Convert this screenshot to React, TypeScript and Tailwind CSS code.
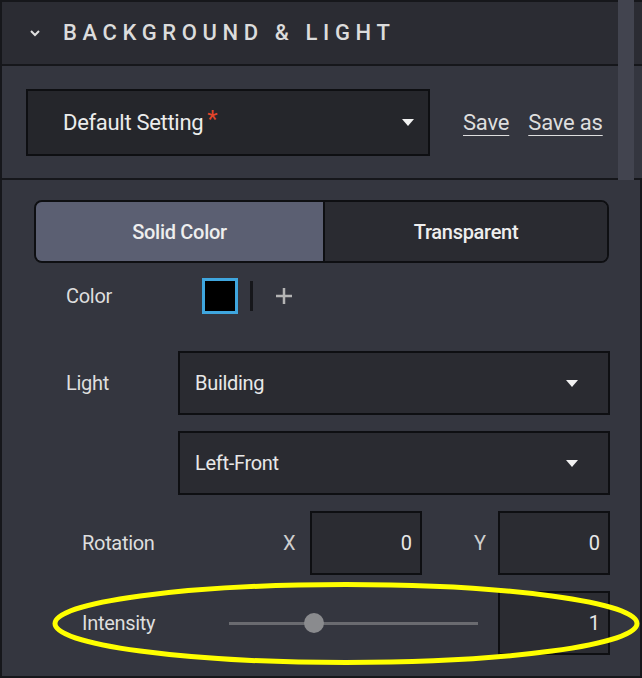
import React from "react";

const Caret = () => (
  <svg width="12" height="7" viewBox="0 0 12 7" className="shrink-0">
    <polygon points="0,0 12,0 6,7" fill="#f2f2f2" />
  </svg>
);

export default function App() {
  const font = { fontFamily: "Roboto, 'Liberation Sans', sans-serif" };
  return (
    <div
      className="relative w-[642px] h-[678px] overflow-hidden bg-[#16171b] text-[#e4e4e4]"
      style={font}
    >
      {/* top section */}
      <div className="flex flex-col pt-[2px] pl-[2px]">
        <div className="h-[62px] bg-[#2b2c33] flex items-center">
          <svg width="12" height="8" viewBox="0 0 12 8" className="ml-[27px]">
            <polyline points="2,2 6,6 10,2" fill="none" stroke="#e0e0e0" strokeWidth="2" />
          </svg>
          <span className="ml-[22px] text-[22px] font-medium tracking-[0.255em] text-[#dcdcdc] leading-none">
            BACKGROUND &amp; LIGHT
          </span>
        </div>
        <div className="h-[2px] bg-[#16171b]" />
        <div className="h-[112px] bg-[#34363f] flex items-center">
          <div className="ml-[24px] w-[404px] h-[67px] bg-[#25262b] border-2 border-[#0e0f12] flex items-center pl-[35px] pr-[14px]">
            <span className="text-[22px] tracking-[-0.3px] text-[#ececec]">Default Setting</span>
            <span className="text-[24px] text-[#e2452a] ml-[4px] -mt-[6px] leading-none">*</span>
            <div className="flex-1" />
            <Caret />
          </div>
          <span className="ml-[33px] text-[22px] tracking-[-0.2px] underline underline-offset-[5px] decoration-1 text-[#dedede]">Save</span>
          <span className="ml-[19px] text-[22px] tracking-[-0.2px] underline underline-offset-[5px] decoration-1 text-[#dedede]">Save as</span>
        </div>
        <div className="h-[2px] bg-[#16171b]" />
      </div>

      {/* scrollbar overlay */}
      <div className="absolute left-[618px] top-0 w-[16px] h-[180px] bg-[#42444f]" />

      {/* lower panel */}
      <div className="mx-[2px] h-[496px] bg-[#34363f] flex flex-col pt-[20px]">
        {/* toggle */}
        <div className="ml-[32px] w-[575px] h-[63px] rounded-[8px] border-2 border-[#0e0f12] flex overflow-hidden">
          <div className="w-[289px] bg-[#5b5f72] flex items-center justify-center text-[20px] font-medium tracking-[-0.3px] text-[#eeeeee] border-r-2 border-[#0e0f12]">
            Solid Color
          </div>
          <div className="flex-1 bg-[#2a2b31] flex items-center justify-center text-[20px] font-medium tracking-[-0.3px] text-[#eeeeee]">
            Transparent
          </div>
        </div>

        {/* color row */}
        <div className="flex items-center h-[36px] mt-[15px]">
          <span className="ml-[64px] w-[136px] text-[20px] tracking-[-0.3px] text-[#dedede]">Color</span>
          <div className="w-[36px] h-[36px] border-[3px] border-[#3fa6de] bg-black" />
          <div className="ml-[12px] w-[3px] h-[30px] bg-[#16171b]" />
          <svg width="18" height="18" viewBox="0 0 18 18" className="ml-[22px]">
            <path d="M9 1 V17 M1 9 H17" stroke="#b4b4b4" strokeWidth="2.5" />
          </svg>
        </div>

        {/* light */}
        <div className="flex items-center mt-[37px]">
          <span className="ml-[64px] w-[112px] text-[20px] tracking-[-0.3px] text-[#dedede]">Light</span>
          <div className="w-[432px] h-[64px] bg-[#2a2b31] border-2 border-[#0e0f12] flex items-center pl-[15px] pr-[30px]">
            <span className="flex-1 text-[20px] tracking-[-0.3px] text-[#e8e8e8]">Building</span>
            <Caret />
          </div>
        </div>
        <div className="flex items-center mt-[16px]">
          <div className="ml-[176px] w-[432px] h-[64px] bg-[#2a2b31] border-2 border-[#0e0f12] flex items-center pl-[15px] pr-[30px]">
            <span className="flex-1 text-[20px] tracking-[-0.3px] text-[#e8e8e8]">Left-Front</span>
            <Caret />
          </div>
        </div>

        {/* rotation */}
        <div className="flex items-center mt-[16px]">
          <span className="ml-[80px] w-[201px] text-[20px] tracking-[-0.3px] text-[#dedede]">Rotation</span>
          <span className="w-[27px] text-[20px] text-[#cfcfcf]">X</span>
          <div className="w-[112px] h-[64px] bg-[#2b2c32] border-2 border-[#0e0f12] flex items-center justify-end pr-[8px] text-[20px] text-[#e8e8e8]">
            0
          </div>
          <span className="ml-[52px] w-[24px] text-[20px] text-[#cfcfcf]">Y</span>
          <div className="w-[112px] h-[64px] bg-[#2b2c32] border-2 border-[#0e0f12] flex items-center justify-end pr-[8px] text-[20px] text-[#e8e8e8]">
            0
          </div>
        </div>

        {/* intensity */}
        <div className="flex items-center mt-[16px]">
          <span className="ml-[80px] w-[147px] text-[20px] tracking-[-0.3px] text-[#dedede]">Intensity</span>
          <div className="relative w-[249px] h-[20px] flex items-center">
            <div className="w-full h-[3px] bg-[#6a6b70]" />
            <div className="absolute left-[75px] top-0 w-[20px] h-[20px] rounded-full bg-[#8a8b8e]" />
          </div>
          <div className="ml-[20px] w-[112px] h-[64px] bg-[#2b2c32] border-2 border-[#0e0f12] flex items-center justify-end pr-[8px] text-[20px] text-[#e8e8e8]">
            1
          </div>
        </div>
      </div>

      {/* annotation ellipse */}
      <svg className="absolute left-0 top-0 pointer-events-none" width="642" height="678">
        <ellipse cx="346" cy="623.5" rx="291" ry="39" fill="none" stroke="#ffff00" strokeWidth="5" />
      </svg>
    </div>
  );
}
